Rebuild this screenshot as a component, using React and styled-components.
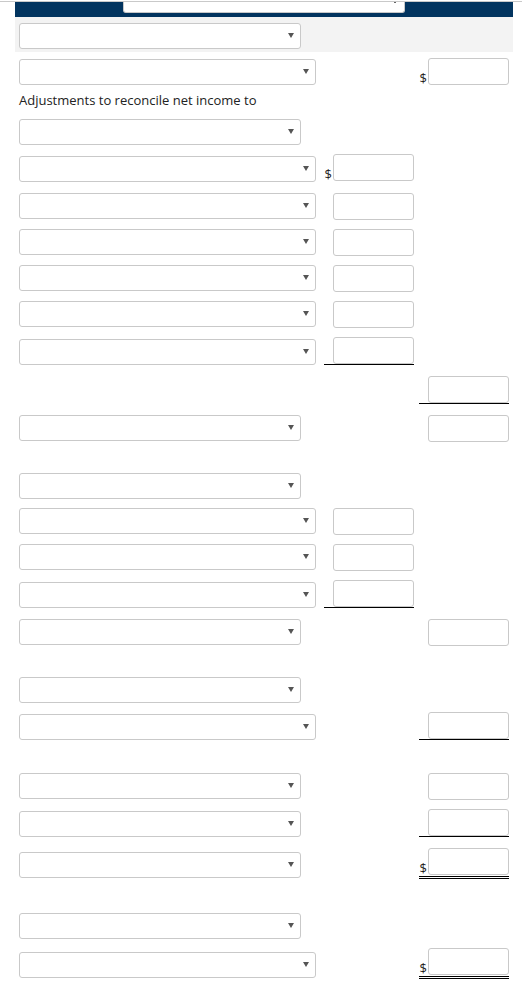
import React from 'react';
import styled, { createGlobalStyle } from 'styled-components';

const rows = [
    { gap: 6, select: 'long', drop: 1, col: 3, dollar: true },
    { label: 'Adjustments to reconcile net income to' },
    { gap: 10, select: 'short' },
    { gap: 9, select: 'long', drop: 2, col: 2, dollar: true },
    { gap: 11, select: 'long', col: 2 },
    { gap: 9, select: 'long', col: 2 },
    { gap: 9, select: 'long', col: 2 },
    { gap: 9, select: 'long', col: 2 },
    { gap: 9, select: 'long', drop: 2, col: 2, line: 'single' },
    { gap: 11, col: 3, line: 'single' },
    { gap: 11, select: 'short', col: 3 },
    { gap: 31, select: 'short' },
    { gap: 9, select: 'long', col: 2 },
    { gap: 9, select: 'long', col: 2 },
    { gap: 9, select: 'long', drop: 2, col: 2, line: 'single' },
    { gap: 11, select: 'short', col: 3 },
    { gap: 31, select: 'short' },
    { gap: 9, select: 'long', drop: 2, col: 3, line: 'single' },
    { gap: 33, select: 'short', col: 3 },
    { gap: 9, select: 'short', drop: 2, col: 3, line: 'single' },
    { gap: 11, select: 'short', drop: 4, col: 3, dollar: true, line: 'double' },
    { gap: 34, select: 'short' },
    { gap: 9, select: 'long', drop: 4, col: 3, dollar: true, line: 'double' },
];

function Dropdown({ size, drop }) {
    return (
        <SelectWrap $size={size} $drop={drop}>
            <Select defaultValue="">
                <option value=""></option>
            </Select>
            <Caret />
        </SelectWrap>
    );
}

function Amount({ dollar, line }) {
    return (
        <AmountCell $line={line}>
            {dollar && <Dollar>$</Dollar>}
            <AmountInput type="text" />
        </AmountCell>
    );
}

function App() {
    return (
        <Page>
            <GlobalStyle />
            <TopRule />
            <Sheet>
                <TopBar>
                    <Tab>
                        <TabMark />
                    </Tab>
                </TopBar>
                <Band>
                    <Dropdown size="short" />
                </Band>
                {rows.map((row, i) => {
                    if (row.label) {
                        return <Label key={i}>{row.label}</Label>;
                    }
                    return (
                        <Row key={i} $gap={row.gap}>
                            <div>{row.select && <Dropdown size={row.select} drop={row.drop} />}</div>
                            <Col>{row.col === 2 && <Amount dollar={row.dollar} line={row.line} />}</Col>
                            <Col $end>{row.col === 3 && <Amount dollar={row.dollar} line={row.line} />}</Col>
                        </Row>
                    );
                })}
            </Sheet>
        </Page>
    );
}

/* ----------------- Styles ----------------- */
const GlobalStyle = createGlobalStyle`
    body {
        margin: 0;
        background: #fff;
        font-family: "Open Sans", "Liberation Sans", Arial, sans-serif;
        color: #222;
    }
`;

const Page = styled.div`
    padding-top: 1px;
    min-height: 985px;
`;

const TopRule = styled.div`
    height: 1px;
    background: #c9c9c9;
`;

const Sheet = styled.div`
    margin: 0 9px 0 15px;
`;

const TopBar = styled.div`
    height: 15px;
    background: #02345f;
    padding-left: 108px;
`;

const Tab = styled.div`
    width: 282px;
    height: 11px;
    background: #fff;
    border: 1px solid #c8c8c8;
    border-top: none;
    border-radius: 0 0 3px 3px;
    display: flex;
    justify-content: flex-end;
    padding-right: 8px;
    box-sizing: border-box;
`;

const TabMark = styled.div`
    width: 2px;
    height: 1px;
    background: #666;
`;

const Band = styled.div`
    background: #f3f3f3;
    height: 35px;
    padding: 6px 0 0 4px;
    box-sizing: border-box;
`;

const Row = styled.div`
    display: grid;
    grid-template-columns: 304px 91px 96px;
    align-items: start;
    margin-top: ${p => p.$gap}px;
    padding-left: 4px;
`;

const Col = styled.div`
    display: flex;
    justify-content: flex-end;
    ${p => p.$end && 'padding-right: 1px;'}
`;

const Label = styled.div`
    margin-top: 6px;
    padding-left: 4px;
    font-size: 13px;
    line-height: 18px;
    color: #222;
`;

const SelectWrap = styled.div`
    position: relative;
    width: ${p => (p.$size === 'long' ? 297 : 282)}px;
    height: 26px;
    margin-top: ${p => p.$drop || 0}px;
`;

const Select = styled.select`
    appearance: none;
    width: 100%;
    height: 100%;
    margin: 0;
    background: #fff;
    border: 1px solid #c9c9c9;
    border-radius: 3px;
    box-sizing: border-box;
    font-family: inherit;
    font-size: 13px;
`;

const Caret = styled.span`
    position: absolute;
    right: 7px;
    top: 10px;
    width: 0;
    height: 0;
    border-left: 3px solid transparent;
    border-right: 3px solid transparent;
    border-top: 5px solid #555;
    pointer-events: none;
`;

const AmountCell = styled.div`
    display: flex;
    align-items: flex-end;
    justify-content: flex-end;
    width: 90px;
    ${p => p.$line === 'single' && 'border-bottom: 1px solid #000;'}
    ${p => p.$line === 'double' && 'border-bottom: 3px double #000; padding-bottom: 1px;'}
`;

const Dollar = styled.span`
    font-size: 13px;
    line-height: 14px;
    margin-right: 1px;
    color: #222;
`;

const AmountInput = styled.input`
    width: 81px;
    height: 27px;
    margin: 0;
    padding: 0 4px;
    border: 1px solid #c9c9c9;
    border-radius: 3px;
    box-sizing: border-box;
    background: #fff;
    font-family: inherit;
    font-size: 13px;
`;

export default App;
